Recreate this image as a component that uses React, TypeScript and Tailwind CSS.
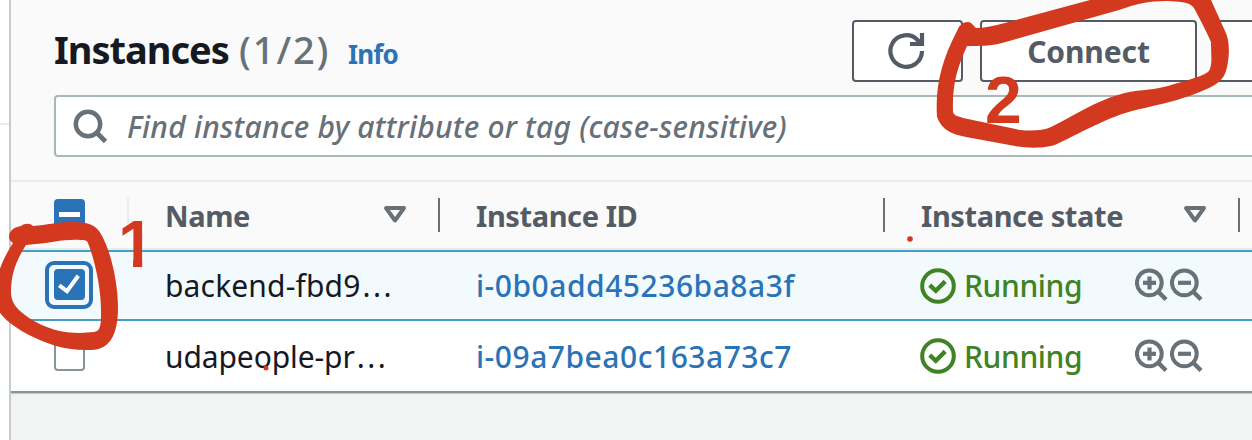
import React from "react";

const ZoomIcon = ({ plus }: { plus?: boolean }) => (
  <svg width="35" height="35" viewBox="0 0 35 35" fill="none" stroke="#687078">
    <circle cx="14.3" cy="14.8" r="12.4" strokeWidth="4" />
    <path d="M23 23.5L31 31.5" strokeWidth="4.4" />
    <path d="M8 14.8H21" strokeWidth="4.2" />
    {plus && <path d="M14.5 8.5V21.5" strokeWidth="4.2" />}
  </svg>
);

const SortIcon = () => (
  <svg width="24" height="20" viewBox="0 0 24 20" fill="none" stroke="#687078" strokeWidth="4" strokeLinejoin="round">
    <path d="M3 3H21L12 15.5Z" />
  </svg>
);

const CheckCircle = () => (
  <svg width="36" height="36" viewBox="0 0 36 36" fill="none" stroke="#3f8324" strokeWidth="4">
    <circle cx="18" cy="18" r="15.8" />
    <path d="M9.7 17.2L15.8 22.8L25.2 13.4" strokeWidth="4.4" />
  </svg>
);

const Divider = ({ light }: { light?: boolean }) => (
  <span className={light ? "h-[34px] w-[2px] shrink-0 bg-[#eaeded]" : "h-[34px] w-[2px] shrink-0 bg-[#687078]"} />
);

const grid = "grid grid-cols-[118px_311px_445px_355px_14px]";

const Row = ({ name, id, selected }: { name: string; id: string; selected?: boolean }) => (
  <div
    className={
      selected
        ? `${grid} h-[71px] border-y-2 border-[#449fc6] bg-[#f2fafe]`
        : `${grid} h-[70px] bg-white`
    }
  >
    <div className="flex items-center pb-[2px] pl-[34px]">
      {selected ? (
        <span className="flex h-12 w-12 items-center justify-center rounded-[9px] border-4 border-[#2b73b7] bg-[#f2fafe]">
          <svg width="31" height="31" viewBox="0 0 31 31" fill="none">
            <rect width="31" height="31" rx="4" fill="#2b73b7" />
            <path d="M5.2 16.3L13 22.2L24.3 6.7" stroke="white" strokeWidth="4" />
          </svg>
        </span>
      ) : (
        <span className="ml-[9px] h-[31px] w-[31px] rounded border-2 border-[#879596] bg-white" />
      )}
    </div>
    <div className={selected ? "flex items-center pl-[36px] text-[30px] tracking-[0.15px] text-[#16191f]" : "flex items-center pl-[36px] text-[30px] tracking-[-0.1px] text-[#16191f]"}>
      {name}
      <span className="ml-[2px] tracking-[2.5px]">...</span>
    </div>
    <div className="flex items-center pl-[36px] text-[30px] font-medium tracking-[0.52px] text-[#2b73b7]">{id}</div>
    <div className="flex items-center pl-[35px]">
      <CheckCircle />
      <span className="ml-[8px] w-[171px] text-[30px] font-medium tracking-[-0.4px] text-[#3f8324]">Running</span>
      <ZoomIcon plus />
      <ZoomIcon />
    </div>
    <div />
  </div>
);

export default function App() {
  return (
    <div className="relative flex h-[440px] w-[1252px] overflow-hidden bg-white font-['Noto_Sans',sans-serif] whitespace-nowrap">
      <aside className="flex h-full w-[9px] shrink-0 flex-col">
        <div className="h-[125px] border-b-2 border-[#eaeded]" />
      </aside>
      <main className="flex h-full w-[1243px] shrink-0 flex-col border-l-2 border-[#c5cccc] bg-[#f2f3f3]">
        <section className="w-[1243px] border-b-2 border-[#879596] bg-[#fafafa] shadow-[0_1px_1px_#c9cfcf]">
          <header className="flex h-[182px] flex-col border-b-2 border-[#eaeded] pl-[43px]">
            <div className="flex h-[95px] pt-5 *:shrink-0">
              <h1 className="mt-[-2px] w-[185px] text-[38px] font-bold leading-[62px] tracking-[-1px] text-[#16191f]">Instances</h1>
              <span className="mt-[-2px] w-[109px] text-[38px] font-medium leading-[62px] tracking-[1.9px] text-[#687078]">(1/2)</span>
              <a className="mt-[3px] w-[504px] text-[26px] font-bold leading-[62px] tracking-[-0.9px] text-[#2b73b7]">Info</a>
              <button className="flex h-[62px] w-[111px] items-center justify-center rounded border-2 border-[#545b64] bg-white">
                <svg className="-ml-[3px]" width="40" height="40" viewBox="0 0 40 40" fill="none" stroke="#545b64" strokeWidth="4.2">
                  <path d="M36 20A15.8 15.8 0 1 1 31.5 9L35 12.5" />
                  <path d="M36 2V13H24" />
                </svg>
              </button>
              <button className="ml-[17px] h-[62px] w-[217px] rounded border-2 border-[#545b64] bg-white text-[30px] font-bold tracking-[-0.1px] text-[#545b64]">
                Connect
              </button>
              <button className="ml-[17px] h-[62px] w-[217px] rounded border-2 border-[#545b64] bg-white" />
            </div>
            <div className="flex h-[62px] w-[1300px] items-center rounded border-2 border-[#aab7b8] bg-white pl-[17px]">
              <svg className="mt-[2px]" width="36" height="36" viewBox="0 0 36 36" fill="none" stroke="#687078">
                <circle cx="15" cy="15" r="12.2" strokeWidth="4.4" />
                <path d="M23.5 23.5L32.5 32.5" strokeWidth="4.8" />
              </svg>
              <span className="ml-[18px] text-[30px] font-medium italic tracking-[0.22px] text-[#687078]">
                Find instance by attribute or tag (case-sensitive)
              </span>
            </div>
          </header>
          <div className={`${grid} h-[68px] border-b-2 border-[#eaeded] text-[29px] font-bold text-[#545b64]`}>
            <div className="flex items-center justify-between pl-[43px]">
              <svg className="mb-[2px]" width="31" height="31" viewBox="0 0 31 31">
                <rect width="31" height="31" rx="4" fill="#2b73b7" />
                <rect x="5" y="13" width="21" height="5" fill="white" />
              </svg>
              <Divider light />
            </div>
            <div className="flex items-center justify-between pl-[36px]">
              <span className="grow pt-[2px] tracking-[-0.4px]">Name</span>
              <span className="mr-[31px]"><SortIcon /></span>
              <Divider />
            </div>
            <div className="flex items-center justify-between pl-[36px]">
              <span className="pt-[2px] tracking-[-0.4px]">Instance ID</span>
              <Divider />
            </div>
            <div className="flex items-center justify-between pl-[36px]">
              <span className="grow pt-[2px] tracking-[-0.4px]">Instance state</span>
              <span className="mr-[31px]"><SortIcon /></span>
              <Divider />
            </div>
            <div />
          </div>
          <Row name="backend-fbd9" id="i-0b0add45236ba8a3f" selected />
          <Row name="udapeople-pr" id="i-09a7bea0c163a73c7" />
        </section>
      </main>
      <svg className="absolute inset-0" width="1252" height="440" viewBox="0 0 1252 440">
        <g fill="#d2391f">
          <path d="M9 237C9 230 15 227 21 226C25 223 30 223 33 226C47 225 57 222 70 222C82 222 92 222 99 231C110 247 118 281 118 308C118 334 110 350 91 350C68 351 48 345 27 334C6 322 -3 313 -6 299C-6 279 3 258 13 243C10 241 9 239 9 237ZM26 245C16 261 11 274 11 292C11 304 18 310 29 318C46 329 63 333 80 333L94 332C101 331 101 324 101 311C101 288 95 261 88 243C87 240 84 240 81 240C62 239 52 243 36 244Z" fillRule="evenodd" />
          <path d="M957 31C959 26 962 22 968 22C971 22 973 25 976 28C984 28 993 26 1001 24L1090 0H1211L1225 31C1231 42 1229 61 1226 71C1223 80 1217 84 1209 88C1185 99 1169 102 1145 108C1112 114 1085 131 1057 144C1046 149 1026 148 1015 146L966 137C951 134 942 130 937 117C935 85 942 60 957 31ZM967 46C957 68 952 86 953 112C954 116 958 116 963 118L1020 130C1032 131 1042 131 1051 127C1077 114 1094 102 1118 95C1136 89 1150 91 1168 86C1180 82 1199 78 1208 72C1213 67 1211 55 1211 42C1206 31 1200 19 1194 8C1189 1 1178 2 1167 1C1148 1 1136 4 1119 10L1002 43C991 46 979 46 967 46Z" fillRule="evenodd" />
          <circle cx="910" cy="239" r="2.8" />
          <circle cx="266" cy="368" r="2.5" />
        </g>
      </svg>
      <span className="absolute left-[985px] top-[67px] font-['Liberation_Sans',sans-serif] text-[66px] font-bold leading-[66px] text-[#d2391f]">2</span>
      <span className="absolute left-[118px] top-[211px] font-['Liberation_Sans',sans-serif] text-[66px] font-bold leading-[66px] text-[#d2391f] [clip-path:polygon(0_0,66%_0,66%_100%,41%_100%,41%_62%,0_62%)]">1</span>
    </div>
  );
}
